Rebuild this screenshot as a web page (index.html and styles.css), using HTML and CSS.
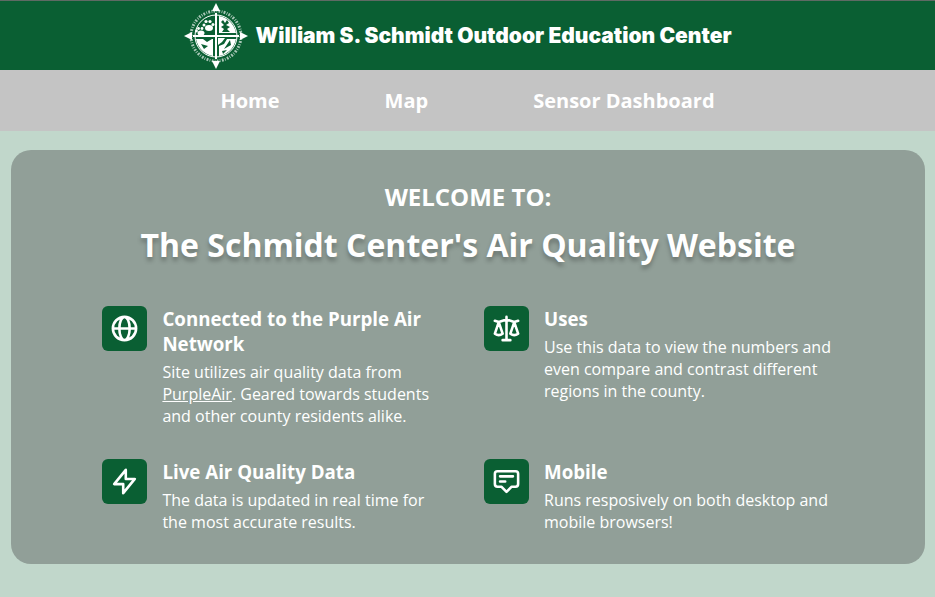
FILE: index.html
```html
<!DOCTYPE html>
<html lang="en">
<head>
<meta charset="utf-8">
<meta name="viewport" content="width=device-width, initial-scale=1">
<title>Schmidt Center Air Quality</title>
<link rel="stylesheet" href="styles.css">
</head>
<body>
<header class="banner">
  <svg class="emblem" viewBox="0 0 64 66" aria-hidden="true">
    <g fill="#fff">
      <path d="M32 0l4 8h-8zM32 66l4-8h-8zM0 33l8-4v8zM64 33l-8-4v8z"/>
      <path d="M31 10h2v46h-2zM9 32h46v2H9z"/>
      <path d="M35 13a21 21 0 0 1 17 17H35z"/>
      <path d="M29 53a21 21 0 0 1-17-17h7l4 3 5-3h1z"/>
      <path d="M35 53V43l5-2 3-5h9a21 21 0 0 1-17 17z"/>
      <path d="M34 35h7l-3 4-4 3z"/>
      <ellipse cx="25" cy="25" rx="4" ry="3"/><circle cx="20" cy="22" r="1.500"/><circle cx="22" cy="18.500" r="1.600"/><circle cx="26" cy="18.500" r="1.600"/><circle cx="29" cy="21.500" r="1.500"/>
      <ellipse cx="17" cy="30" rx="3.500" ry="2.500"/><circle cx="12.500" cy="28" r="1.400"/><circle cx="14.500" cy="25.500" r="1.400"/><circle cx="18" cy="25.500" r="1.400"/>
    </g>
    <g fill="none" stroke="#fff">
      <circle cx="32" cy="33" r="21" stroke-width="1"/>
      <circle cx="32" cy="33" r="25" stroke-width="3" stroke-dasharray="1.8 1.4 0.8 1.2" opacity=".65"/>
    </g>
    <path d="M39 17l2 3 2-3 2 3-3 2 4 2-3 2 3 3h-8l2-3-3-2 3-2-3-3zM46 37l-6 9 7-4zM17 41l7 2-4 3zM38 48l5-1-4 4z" fill="#0a5f33"/>
  </svg>
  <span class="wordmark">William S. Schmidt Outdoor Education Center</span>
</header>
<nav class="menu">
  <a href="#home">Home</a>
  <a href="#map">Map</a>
  <a href="#dashboard">Sensor Dashboard</a>
</nav>
<main class="card">
  <h2 class="welcome">WELCOME TO:</h2>
  <h1 class="title">The Schmidt Center's Air Quality Website</h1>
  <div class="features">
    <section class="feature">
      <div class="tile"><svg viewBox="0 0 24 24"><path d="M21 12a9 9 0 01-9 9m9-9a9 9 0 00-9-9m9 9H3m9 9a9 9 0 01-9-9m9 9c2.200 0 4-4.030 4-9s-1.800-9-4-9m0 18c-2.200 0-4-4.030-4-9s1.800-9 4-9m-9 9a9 9 0 019-9"/></svg></div>
      <div class="copy">
        <h3>Connected to the Purple Air Network</h3>
        <p>Site utilizes air quality data from <a href="#purpleair">PurpleAir</a>. Geared towards students and other county residents alike.</p>
      </div>
    </section>
    <section class="feature">
      <div class="tile"><svg viewBox="0 0 24 24"><path d="M3 6l3 1m0 0l-3 9a5.002 5.002 0 006.001 0M6 7l3 9M6 7l6-2m6 2l3-1m-3 1l-3 9a5.002 5.002 0 006.001 0M18 7l3 9m-3-9l-6-2m0-2v2m0 16V5m0 16H9m3 0h3"/></svg></div>
      <div class="copy">
        <h3>Uses</h3>
        <p>Use this data to view the numbers and even compare and contrast different regions in the county.</p>
      </div>
    </section>
    <section class="feature">
      <div class="tile"><svg viewBox="0 0 24 24"><path d="M13 10V3L4 14h7v7l9-11h-7z"/></svg></div>
      <div class="copy">
        <h3>Live Air Quality Data</h3>
        <p>The data is updated in real time for the most accurate results.</p>
      </div>
    </section>
    <section class="feature">
      <div class="tile"><svg viewBox="0 0 24 24"><path d="M7 8h10M7 12h4m1 8l-4-4H5a2 2 0 01-2-2V6a2 2 0 012-2h14a2 2 0 012 2v8a2 2 0 01-2 2h-3l-4 4z"/></svg></div>
      <div class="copy">
        <h3>Mobile</h3>
        <p>Runs resposively on both desktop and mobile browsers!</p>
      </div>
    </section>
  </div>
</main>
</body>
</html>
```
FILE: styles.css
```css
* { box-sizing: border-box; }

body {
  margin: 0;
  background: #c1d7cb;
  color: #fff;
  font-family: "Open Sans", sans-serif;
}

h1, h2, h3, p { margin: 0; }
a { color: inherit; }

.banner {
  display: flex;
  align-items: center;
  justify-content: center;
  gap: 8px;
  height: 70px;
  padding-right: 20px;
  border-top: 1px solid #5f6a64;
  background: #0a5f33;
}

.emblem { width: 64px; height: 66px; }

.wordmark {
  font: 900 21px/24px Inter, sans-serif;
}

.menu {
  display: flex;
  align-items: center;
  justify-content: center;
  gap: 105px;
  height: 61px;
  background: #c4c4c4;
}

.menu a {
  font-size: 20px;
  font-weight: 700;
  text-decoration: none;
}

.card {
  margin: 19px 10px 0 11px;
  padding: 31px 0;
  border-radius: 20px;
  background: #919f98;
}

.welcome {
  font-size: 24px;
  line-height: 32px;
  text-align: center;
}

.title {
  margin-top: 8px;
  font-size: 32px;
  line-height: 48px;
  text-align: center;
  text-shadow: 0 4px 4px rgba(0, 0, 0, 0.25);
}

.features {
  display: grid;
  grid-template-columns: 1fr 1fr;
  gap: 32px;
  width: 80%;
  margin: 37px auto 0;
}

.feature {
  display: flex;
  align-items: flex-start;
  gap: 15px;
}

.tile {
  display: flex;
  flex: none;
  align-items: center;
  justify-content: center;
  width: 45px;
  height: 45px;
  border-radius: 6px;
  background: #0a5f33;
}

.tile svg {
  width: 31px;
  height: 31px;
  fill: none;
  stroke: #fff;
  stroke-width: 2;
  stroke-linecap: round;
  stroke-linejoin: round;
}

.feature h3 { line-height: 25px; }

.feature p {
  margin-top: 5px;
  font-size: 16px;
  line-height: 22px;
}
```
